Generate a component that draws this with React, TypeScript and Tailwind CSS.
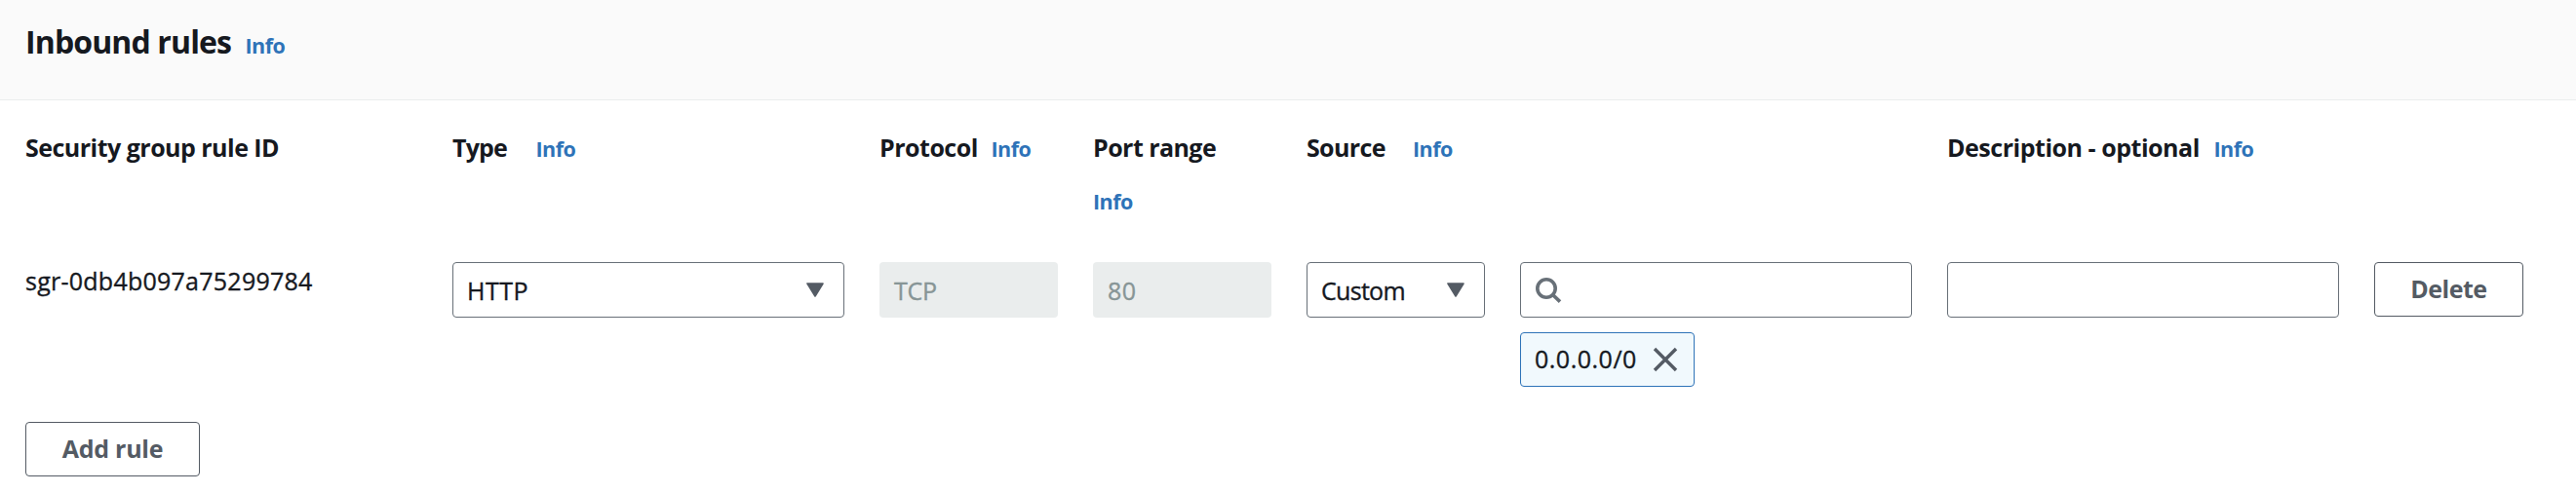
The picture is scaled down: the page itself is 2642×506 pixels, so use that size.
const LABEL = "text-[25px] leading-[34px] font-bold whitespace-nowrap shrink-0";
const VALUE = "text-[25px] leading-[34px] [-webkit-text-stroke:0.35px_currentColor]";

function Info({ className = "" }: { className?: string }) {
  return (
    <a className={`text-[21.5px] leading-[34px] font-bold tracking-[-0.5px] text-[#2e73b8] ${className}`}>Info</a>
  );
}

function Caret() {
  return (
    <svg width="18" height="15" viewBox="0 0 18 15" className="shrink-0">
      <path d="M1 1H17L9 14Z" fill="#545b64" stroke="#545b64" strokeWidth="1.6" strokeLinejoin="round" />
    </svg>
  );
}

function Select({ value, className }: { value: string; className: string }) {
  return (
    <div className="flex h-[57px] items-center justify-between rounded-[4px] border border-[#687078] bg-white pr-[20px] pl-[14px]">
      <span className={`${VALUE} ${className}`}>{value}</span>
      <Caret />
    </div>
  );
}

function Disabled({ value, className }: { value: string; className: string }) {
  return (
    <div className="flex h-[57px] items-center rounded-[4px] bg-[#eaeded] px-[15px] text-[#879596]">
      <span className={`${VALUE} ${className}`}>{value}</span>
    </div>
  );
}

const BUTTON =
  "flex h-[56px] items-center justify-center rounded-[4px] border border-[#545b64] bg-white pb-[2px] text-[25px] leading-[34px] font-bold text-[#545b64]";

export default function App() {
  return (
    <div className="min-h-[506px] w-full bg-white font-['Open_Sans',sans-serif] text-[#16191f]">
      <header className="flex h-[103px] items-baseline border-b border-[#eaeded] bg-[#fafafa] pt-[21px] pl-[26px]">
        <h2 className="w-[225.5px] shrink-0 text-[32px] leading-[44px] font-bold tracking-[-0.87px] whitespace-nowrap">Inbound rules</h2>
        <Info />
      </header>
      <div className="px-[26px] pt-[31px]">
        <div className="grid grid-cols-[402px_402px_183px_183px_183px_402px_402px_153px] gap-x-9">
          <div className="h-[135px]">
            <span className={`${LABEL} tracking-[-0.52px]`}>Security group rule ID</span>
          </div>
          <div className="flex items-baseline self-start">
            <span className={`${LABEL} w-[85.5px] tracking-[-0.8px]`}>Type</span>
            <Info />
          </div>
          <div className="flex items-baseline self-start">
            <span className={`${LABEL} w-[114.5px] tracking-[-0.5px]`}>Protocol</span>
            <Info />
          </div>
          <div className="flex flex-col items-start self-start">
            <span className={`${LABEL} tracking-[-0.55px]`}>Port range</span>
            <Info className="mt-[22px]" />
          </div>
          <div className="col-span-2 flex items-baseline self-start">
            <span className={`${LABEL} w-[109px] tracking-[-0.65px]`}>Source</span>
            <Info />
          </div>
          <div className="col-span-2 flex items-baseline self-start">
            <span className={`${LABEL} w-[273.5px] tracking-[-0.47px]`}>Description - optional</span>
            <Info />
          </div>

          <div className={`${VALUE} pt-[2px] tracking-[0.25px]`}>sgr-0db4b097a75299784</div>
          <Select value="HTTP" className="tracking-[0.5px]" />
          <Disabled value="TCP" className="tracking-[-0.2px]" />
          <Disabled value="80" className="tracking-[0.5px]" />
          <Select value="Custom" className="tracking-[-0.7px]" />
          <div className="flex flex-col items-start gap-[15px]">
            <div className="flex h-[57px] w-full items-center rounded-[4px] border border-[#687078] bg-white pl-[14px]">
              <svg width="28" height="28" viewBox="0 0 28 28" fill="none" stroke="#687078" strokeWidth="3.6">
                <circle cx="12" cy="12" r="9.2" />
                <path d="M18.5 18.5L26 25.6" />
              </svg>
            </div>
            <div className="flex h-[56px] w-[179px] items-center justify-between rounded-[4px] border border-[#2e73b8] bg-[#f1f9fd] pr-[16px] pl-[14px]">
              <span className={`${VALUE} pb-[2px] tracking-[0.5px]`}>0.0.0.0/0</span>
              <svg width="26" height="26" viewBox="0 0 26 26" stroke="#545b64" strokeWidth="3.4">
                <path d="M2 2L24 24M24 2L2 24" />
              </svg>
            </div>
          </div>
          <div className="h-[57px] rounded-[4px] border border-[#687078] bg-white" />
          <button className={`${BUTTON} tracking-[-0.5px]`}>Delete</button>
        </div>
        <button className={`${BUTTON} mt-[36px] w-[179px] tracking-[-0.25px]`}>Add rule</button>
      </div>
    </div>
  );
}
